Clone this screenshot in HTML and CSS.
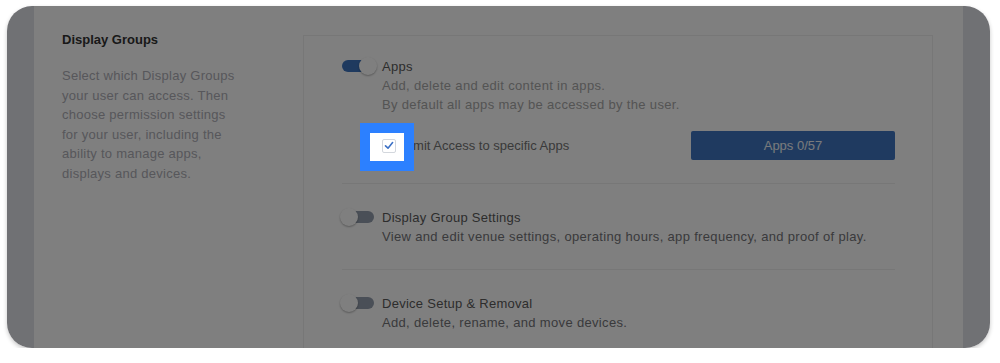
FILE: index.html
```html
<!DOCTYPE html>
<html lang="en">
<head>
    <meta charset="UTF-8">
    <meta name="viewport" content="width=device-width, initial-scale=1.0">
    <title>User permissions - Display Groups</title>
    <link rel="stylesheet" href="styles.css">
</head>
<body>
    <div class="frame">
        <div class="strip"></div>

        <div class="main">
            <div class="intro">
                <h2>Display Groups</h2>
                <p>Select which Display Groups your user can access. Then choose permission settings for your user, including the ability to manage apps, displays and devices.</p>
            </div>

            <div class="panel">
                <div class="perm">
                    <span class="toggle on"><span class="knob"></span></span>
                    <div class="perm-body">
                        <div class="perm-title">Apps</div>
                        <div class="perm-desc light">Add, delete and edit content in apps.<br>By default all apps may be accessed by the user.</div>
                        <div class="limit-row">
                            <label class="limit">
                                <span class="spot">
                                    <span class="check">
                                        <svg width="10" height="9" viewBox="0 0 10 9"><path d="M1.5 4.8 L4 7.2 L8.6 1.6" fill="none" stroke="#3e72c6" stroke-width="1.6" stroke-linecap="round" stroke-linejoin="round"/></svg>
                                    </span>
                                </span>
                                Limit Access to specific Apps
                            </label>
                            <button class="apps-btn">Apps 0/57</button>
                        </div>
                    </div>
                </div>

                <div class="perm">
                    <span class="toggle"><span class="knob"></span></span>
                    <div class="perm-body">
                        <div class="perm-title">Display Group Settings</div>
                        <div class="perm-desc">View and edit venue settings, operating hours, app frequency, and proof of play.</div>
                    </div>
                </div>

                <div class="perm">
                    <span class="toggle"><span class="knob"></span></span>
                    <div class="perm-body">
                        <div class="perm-title">Device Setup &amp; Removal</div>
                        <div class="perm-desc">Add, delete, rename, and move devices.</div>
                    </div>
                </div>
            </div>
        </div>

        <div class="strip"></div>

        <div class="overlay"></div>
    </div>
</body>
</html>
```

FILE: styles.css
```css
body {
    margin: 0;
    background: #fff;
    font-family: 'Liberation Sans', Arial, sans-serif;
    font-size: 13px;
}

.frame {
    position: relative;
    display: flex;
    width: 983px;
    height: 342px;
    margin: 6px 0 0 7px;
    border-radius: 25px;
    overflow: hidden;
    background: #fff;
    box-shadow: 0 2px 4px rgba(0,0,0,0.22);
}

.strip {
    flex: 0 0 27px;
    background: #e1e2e8;
}

.strip:last-of-type {
    flex-basis: 29px;
}

.main {
    flex: 1;
    display: flex;
    padding: 0 28px;
    background: #fff;
}

.intro {
    flex: 0 0 241px;
    padding-top: 24px;
}

.intro h2 {
    margin: 0 0 17px;
    font-size: 13px;
    line-height: 19px;
    font-weight: bold;
    color: #333;
}

.intro p {
    width: 180px;
    margin: 0;
    line-height: 19.5px;
    letter-spacing: 0.26px;
    color: #aeaeb6;
}

.panel {
    flex: 0 0 630px;
    box-sizing: border-box;
    margin-top: 29px;
    height: 400px;
    padding: 21px 37px 0 38px;
    border: 1px solid #eeeeee;
}

.perm {
    display: flex;
    gap: 8px;
    padding: 24px 0 23px;
    border-top: 1px solid #efefef;
}

.perm:first-child {
    padding-top: 0;
    border-top: none;
}

.toggle {
    position: relative;
    flex: 0 0 32px;
    height: 12px;
    margin-top: 3px;
    border-radius: 6px;
    background: #949eae;
}

.toggle.on {
    background: #3e74be;
}

.knob {
    position: absolute;
    top: -3px;
    left: -2px;
    width: 18px;
    height: 18px;
    border-radius: 50%;
    background: #fff;
    box-shadow: 0 1px 2px rgba(0,0,0,0.3);
}

.toggle.on .knob {
    left: auto;
    right: -3px;
}

.perm-body {
    flex: 1;
    line-height: 19px;
}

.perm-title {
    letter-spacing: 0.27px;
    color: #5a5a5a;
}

.perm-desc {
    letter-spacing: 0.33px;
    color: #747478;
}

.perm-desc.light {
    color: #a8a8a8;
}

.limit-row {
    display: flex;
    align-items: center;
    justify-content: space-between;
    margin-top: 17px;
}

.limit {
    display: flex;
    align-items: center;
    gap: 7px;
    color: #747474;
}

.spot {
    position: relative;
    z-index: 2;
    display: flex;
    padding: 6px 8px 8px 12px;
    margin: -6px -8px -8px -12px;
    background: #fff;
    outline: 10px solid #2c80ff;
}

.check {
    display: flex;
    align-items: center;
    justify-content: center;
    box-sizing: border-box;
    width: 14px;
    height: 14px;
    border: 1px solid #d3d7dd;
    border-radius: 2px;
    background: #fff;
}

.apps-btn {
    width: 204px;
    height: 29px;
    border: none;
    border-radius: 2px;
    background: #3e74c0;
    color: #f2f5f9;
    font-family: inherit;
    font-size: 13px;
}

.overlay {
    position: absolute;
    inset: 0;
    z-index: 1;
    background: rgba(0,0,0,0.5);
}
```
